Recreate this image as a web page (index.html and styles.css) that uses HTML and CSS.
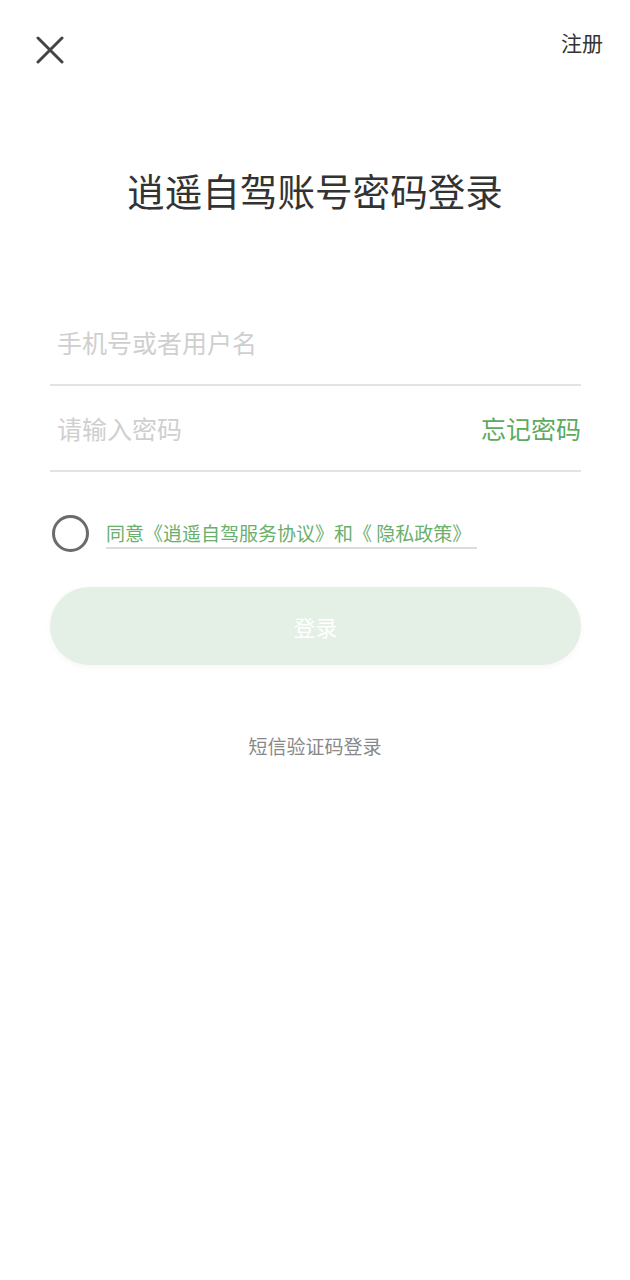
FILE: index.html
```html
<!DOCTYPE html>
<html lang="zh-CN">
<head>
  <meta name="viewport" content="width=device-width, initial-scale=1.0">
  <meta charset="UTF-8">
  <title>账号密码登录</title>
  <link rel="stylesheet" href="styles.css">
</head>
<body>

<div class="topbar">
  <button class="close-btn" aria-label="关闭">
    <svg width="28" height="28" viewBox="0 0 28 28">
      <path d="M2 2 L26 26 M26 2 L2 26" stroke="#444" stroke-width="3" stroke-linecap="round" fill="none"/>
    </svg>
  </button>
  <a class="register" href="#">注册</a>
</div>

<h1 class="title">逍遥自驾账号密码登录</h1>

<form class="login-form" onsubmit="return false;">
  <div class="field">
    <input type="text" placeholder="手机号或者用户名">
  </div>
  <div class="field">
    <input type="password" placeholder="请输入密码">
    <a class="forgot" href="#">忘记密码</a>
  </div>

  <label class="agree">
    <span class="check"></span>
    <span class="agree-text">同意《逍遥自驾服务协议》和《 隐私政策》</span>
  </label>

  <button class="submit" type="submit">登录</button>
</form>

<a class="sms-login" href="#">短信验证码登录</a>

</body>
</html>
```

FILE: styles.css
```css
* {
  box-sizing: border-box;
}
body {
  margin: 0;
  background-color: #fff;
  color: #333;
  font-family: "Noto Sans CJK SC", "Noto Sans", sans-serif;
}

.topbar {
  display: flex;
  justify-content: space-between;
  align-items: flex-start;
  padding: 25px 27px 0 36px;
  height: 100px;
}

.close-btn {
  background: none;
  border: none;
  padding: 0;
  margin-top: 11px;
  width: 28px;
  height: 28px;
  cursor: pointer;
}

.register {
  font-size: 21px;
  line-height: 34px;
  color: #333;
  text-decoration: none;
}

.title {
  margin: 62px 0 0;
  text-align: center;
  font-size: 37.6px;
  line-height: 56px;
  font-weight: 400;
  color: #333;
}

.login-form {
  margin: 82px 49px 0 50px;
}

.field {
  display: flex;
  align-items: center;
  height: 86px;
  border-bottom: 2px solid #e3e3e3;
}

.field input {
  flex: 1;
  border: none;
  outline: none;
  padding: 0 0 0 7px;
  font-family: inherit;
  font-size: 25px;
  color: #333;
  background: transparent;
}

.field input::placeholder {
  color: #cfcfcf;
}

.forgot {
  font-size: 25px;
  color: #5caa5f;
  text-decoration: none;
}

.agree {
  display: flex;
  align-items: center;
  margin-top: 43px;
  padding-left: 2px;
}

.check {
  width: 37px;
  height: 37px;
  border: 3px solid #6b6b6b;
  border-radius: 50%;
  flex-shrink: 0;
}

.agree-text {
  margin-left: 17px;
  font-size: 19px;
  line-height: 28px;
  color: #6aaf6c;
  border-bottom: 2px solid #dcdcdc;
  padding-right: 6px;
}

.submit {
  display: block;
  width: 100%;
  height: 78px;
  margin-top: 35px;
  border: none;
  border-radius: 39px;
  background-color: #e4efe5;
  color: #fff;
  font-family: inherit;
  font-size: 22px;
  box-shadow: 0 2px 6px rgba(0,0,0,0.04);
  cursor: pointer;
}

.sms-login {
  display: block;
  margin-top: 66px;
  text-align: center;
  font-size: 19px;
  line-height: 30px;
  color: #888;
  text-decoration: none;
}
```
